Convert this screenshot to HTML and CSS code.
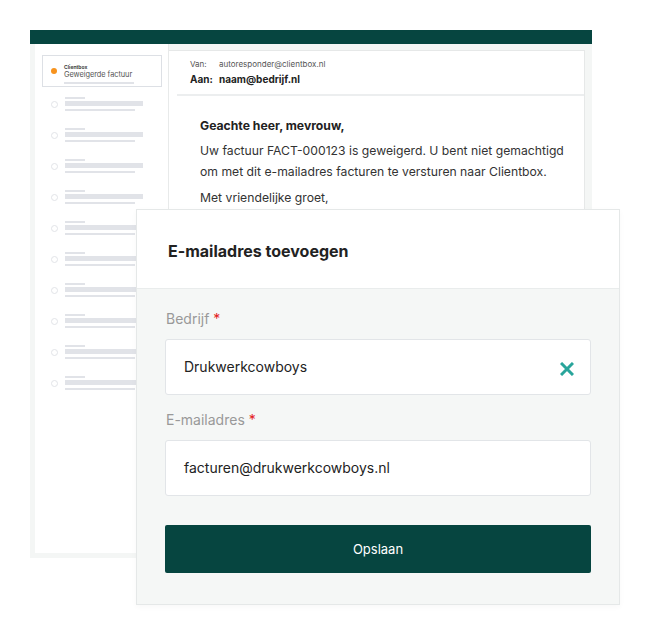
FILE: index.html
```html
<!DOCTYPE html>
<html lang="nl">
<head>
    <meta charset="UTF-8">
    <meta name="viewport" content="width=device-width, initial-scale=1.0">
    <title>Clientbox - E-mailadres toevoegen</title>
    <link rel="stylesheet" href="styles.css">
</head>
<body>
    <div class="scene">
        <div class="window">
            <div class="window-bar"></div>
            <div class="window-body">
                <div class="sidebar">
                    <div class="mail-item selected">
                        <span class="dot active"></span>
                        <div class="mail-text">
                            <div class="mail-from">Clientbox</div>
                            <div class="mail-subject">Geweigerde factuur</div>
                            <div class="bar thin"></div>
                        </div>
                    </div>
                    <div class="mail-list">
                        <div class="mail-item"><span class="dot"></span><div class="mail-lines"><div class="bar short"></div><div class="bar long"></div><div class="bar thin"></div></div></div>
                        <div class="mail-item"><span class="dot"></span><div class="mail-lines"><div class="bar short"></div><div class="bar long"></div><div class="bar thin"></div></div></div>
                        <div class="mail-item"><span class="dot"></span><div class="mail-lines"><div class="bar short"></div><div class="bar long"></div><div class="bar thin"></div></div></div>
                        <div class="mail-item"><span class="dot"></span><div class="mail-lines"><div class="bar short"></div><div class="bar long"></div><div class="bar thin"></div></div></div>
                        <div class="mail-item"><span class="dot"></span><div class="mail-lines"><div class="bar short"></div><div class="bar long"></div><div class="bar thin"></div></div></div>
                        <div class="mail-item"><span class="dot"></span><div class="mail-lines"><div class="bar short"></div><div class="bar long"></div><div class="bar thin"></div></div></div>
                        <div class="mail-item"><span class="dot"></span><div class="mail-lines"><div class="bar short"></div><div class="bar long"></div><div class="bar thin"></div></div></div>
                        <div class="mail-item"><span class="dot"></span><div class="mail-lines"><div class="bar short"></div><div class="bar long"></div><div class="bar thin"></div></div></div>
                        <div class="mail-item"><span class="dot"></span><div class="mail-lines"><div class="bar short"></div><div class="bar long"></div><div class="bar thin"></div></div></div>
                        <div class="mail-item"><span class="dot"></span><div class="mail-lines"><div class="bar short"></div><div class="bar long"></div><div class="bar thin"></div></div></div>
                    </div>
                </div>
                <div class="mail">
                    <div class="mail-head">
                        <div class="head-row from"><span class="head-label">Van:</span>autoresponder@clientbox.nl</div>
                        <div class="head-row to"><span class="head-label">Aan:</span>naam@bedrijf.nl</div>
                    </div>
                    <div class="mail-content">
                        <p class="greeting">Geachte heer, mevrouw,</p>
                        <p>Uw factuur FACT-000123 is geweigerd. U bent niet gemachtigd om met dit e-mailadres facturen te versturen naar Clientbox.</p>
                        <p>Met vriendelijke groet,</p>
                    </div>
                </div>
            </div>
        </div>

        <div class="modal">
            <div class="modal-header">
                <h2>E-mailadres toevoegen</h2>
            </div>
            <div class="modal-body">
                <label class="field-label">Bedrijf <span class="required">*</span></label>
                <div class="field">
                    <span class="field-value">Drukwerkcowboys</span>
                    <svg class="clear" width="14" height="14" viewBox="0 0 14 14">
                        <path d="M1 1 L13 13 M13 1 L1 13" stroke="#29a59b" stroke-width="3" stroke-linecap="butt"/>
                    </svg>
                </div>
                <label class="field-label">E-mailadres <span class="required">*</span></label>
                <div class="field">
                    <span class="field-value">facturen@drukwerkcowboys.nl</span>
                </div>
                <button class="save">Opslaan</button>
            </div>
        </div>
    </div>
</body>
</html>
```

FILE: styles.css
```css
body {
    margin: 0;
    background: #fff;
    font-family: Inter, "Noto Sans", sans-serif;
    color: #222;
}
.scene {
    position: relative;
    padding: 30px 0 0 30px;
    height: 601px;
}
.window {
    width: 562px;
}
.window-bar {
    height: 14px;
    background-color: #064540;
}
.window-body {
    display: flex;
    height: 509px;
    padding: 0 7px 5px 5px;
    background-color: #f4f6f5;
}
.sidebar {
    width: 134px;
    background: #fff;
    border-right: 1px solid #e8eaea;
    padding: 11px 0 0 7px;
    box-sizing: border-box;
}
.mail-item {
    display: flex;
    align-items: center;
    padding-left: 9px;
    gap: 7px;
}
.mail-item.selected {
    width: 120px;
    height: 32px;
    box-sizing: border-box;
    border: 1px solid #dde0e5;
    padding-left: 8px;
    gap: 7px;
}
.dot {
    width: 5px;
    height: 5px;
    border: 1px solid #e2e4e8;
    border-radius: 50%;
    flex-shrink: 0;
}
.dot.active {
    width: 6px;
    height: 6px;
    border: none;
    background-color: #f7931e;
}
.mail-text {
    padding-top: 5px;
}
.mail-from {
    font-size: 5px;
    font-weight: 700;
    color: #444;
    line-height: 6px;
}
.mail-subject {
    font-size: 7.4px;
    letter-spacing: -0.05px;
    color: #555;
    line-height: 10px;
    margin-bottom: 2px;
}
.mail-list {
    display: flex;
    flex-direction: column;
    gap: 17px;
    margin-top: 10px;
}
.bar {
    background-color: #e1e3e8;
}
.bar.short {
    width: 20px;
    height: 2px;
    margin-bottom: 2px;
}
.bar.long {
    width: 78px;
    height: 5px;
    margin-bottom: 3px;
}
.bar.thin {
    width: 70px;
    height: 2px;
}
.mail {
    flex: 1;
    margin-top: 6px;
    background: #fff;
    border: 1px solid #e6e8e8;
    border-left: none;
}
.mail-head {
    margin-left: 8px;
    padding: 6px 0 0 13px;
    height: 37px;
    border-bottom: 2px solid #eceeef;
}
.head-row {
    display: flex;
}
.head-row.from {
    font-size: 8px;
    color: #555;
    line-height: 14px;
}
.head-row.to {
    font-size: 10px;
    font-weight: 700;
    color: #222;
    line-height: 16px;
}
.head-label {
    width: 29px;
}
.mail-content {
    padding: 19px 12px 0 31px;
    font-size: 12.2px;
    line-height: 21px;
    color: #333;
}
.mail-content p {
    margin: 0 0 5px;
}
.mail-content .greeting {
    font-weight: 700;
    color: #222;
    margin-bottom: 4px;
}
.modal {
    position: absolute;
    left: 136px;
    top: 209px;
    width: 484px;
    border: 1px solid #e5e8e8;
    box-sizing: border-box;
    background: #fff;
    box-shadow: 0 2px 6px rgba(0, 0, 0, 0.03);
}
.modal-header {
    height: 79px;
    display: flex;
    align-items: center;
    padding: 4px 0 0 31px;
    box-sizing: border-box;
    border-bottom: 1px solid #e9ecec;
}
.modal-header h2 {
    margin: 0;
    font-size: 16px;
    font-weight: 700;
    color: #222;
}
.modal-body {
    background-color: #f5f7f6;
    padding: 20px 28px 31px;
    display: flex;
    flex-direction: column;
}
.field-label {
    font-size: 14px;
    line-height: 20px;
    color: #999;
    margin-bottom: 10px;
    padding-left: 1px;
}
.required {
    color: #e3201b;
}
.field {
    height: 56px;
    box-sizing: border-box;
    border: 1px solid #e2e5e8;
    border-radius: 3px;
    background: #fff;
    display: flex;
    align-items: center;
    justify-content: space-between;
    padding: 0 16px 0 18px;
    margin-bottom: 15px;
}
.field-value {
    font-size: 14px;
    color: #222;
    margin-top: -1px;
}
.clear {
    margin-top: 3px;
}
.save {
    margin-top: 14px;
    height: 48px;
    border: none;
    border-radius: 2px;
    background-color: #064540;
    color: #fff;
    font-family: Inter, "Noto Sans", sans-serif;
    font-size: 13px;
}
```
